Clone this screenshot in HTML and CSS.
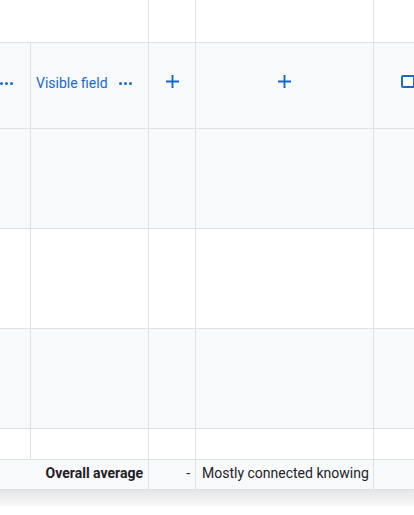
FILE: index.html
```html
<!DOCTYPE html>
<html>
<head>
<meta charset="utf-8">
<link rel="stylesheet" href="styles.css">
</head>
<body>
<div class="viewport">
  <div class="grid">
    <div class="cell top span2"></div>
    <div class="cell top"></div>
    <div class="cell top"></div>
    <div class="cell top last"></div>

    <div class="cell head c0"><span class="dots"><i></i><i></i><i></i></span></div>
    <div class="cell head c1"><span class="label">Visible field</span><span class="dots"><i></i><i></i><i></i></span></div>
    <div class="cell head center"><svg class="plus" viewBox="0 0 14 14"><path d="M7 0v14M0 7h14" stroke="#1467c4" stroke-width="2"/></svg></div>
    <div class="cell head center"><svg class="plus" viewBox="0 0 14 14"><path d="M7 0v14M0 7h14" stroke="#1467c4" stroke-width="2"/></svg></div>
    <div class="cell head last"><span class="checkbox"></span></div>

    <div class="cell row alt"></div><div class="cell row alt"></div><div class="cell row alt"></div><div class="cell row alt"></div><div class="cell row alt last"></div>
    <div class="cell row"></div><div class="cell row"></div><div class="cell row"></div><div class="cell row"></div><div class="cell row last"></div>
    <div class="cell row alt"></div><div class="cell row alt"></div><div class="cell row alt"></div><div class="cell row alt"></div><div class="cell row alt last"></div>
    <div class="cell short"></div><div class="cell short"></div><div class="cell short"></div><div class="cell short"></div><div class="cell short last"></div>

    <div class="cell foot span2 right"><b>Overall average</b></div>
    <div class="cell foot right dash">-</div>
    <div class="cell foot text">Mostly connected knowing</div>
    <div class="cell foot last"></div>
  </div>
  <div class="scrollbar"></div>
</div>
</body>
</html>
```

FILE: styles.css
```css
html, body {
  margin: 0;
  padding: 0;
  background: #ffffff;
}
body {
  font-family: Roboto, "Liberation Sans", Arial, sans-serif;
  font-size: 14px;
  color: #222326;
}
.viewport {
  width: 414px;
  height: 515px;
  overflow: hidden;
}
.grid {
  display: grid;
  grid-template-columns: 31px 118px 47px 178px 80px;
  grid-template-rows: 43px 86px 100px 100px 100px 31px 30px;
  width: 454px;
}
.cell {
  box-sizing: border-box;
  border-right: 1px solid #dfe1e6;
  border-bottom: 1px solid #dfe1e6;
  background: #ffffff;
  display: flex;
  align-items: center;
  min-width: 0;
  overflow: hidden;
}
.span2 { grid-column: span 2; }
.head { background: #f8f9fb; padding-bottom: 6px; }
.alt { background: #f8f9fb; }
.foot { background: #f8f9fb; padding-bottom: 3px; }
.center { justify-content: center; }
.right { justify-content: flex-end; }
.c0 { padding-left: 0; }
.c1 { padding-left: 5px; padding-right: 16px; justify-content: space-between; }
.label {
  color: #1b6acb;
  font-size: 14px;
}
.dots {
  display: inline-flex;
  gap: 2px;
  padding-top: 1px;
}
.dots i {
  width: 3px;
  height: 3px;
  border-radius: 50%;
  background: #1b6acb;
  display: block;
}
.plus {
  width: 13px;
  height: 13px;
  margin-top: -3px;
}
.head.last { padding-left: 27px; }
.checkbox {
  box-sizing: border-box;
  width: 14px;
  height: 13px;
  border: 2px solid #1b6acb;
  border-radius: 2px;
  margin-top: -2px;
  background: #fff;
  flex: none;
}
.foot.right { padding-right: 5px; }
.foot.right b { font-weight: 700; color: #1f2023; }
.foot.dash { padding-right: 5px; }
.text { padding-left: 6px; white-space: nowrap; }
.scrollbar {
  height: 16px;
  background: linear-gradient(#e5e6e8, #f1f1f2 60%, #f6f6f7);
}
```
